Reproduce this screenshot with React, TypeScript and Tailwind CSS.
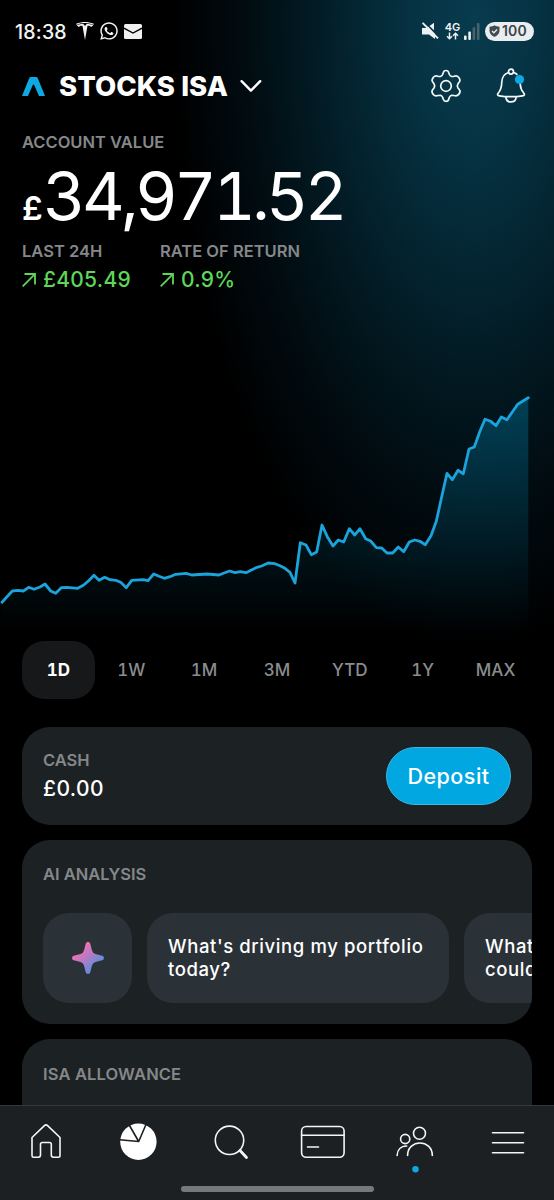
import type { ReactNode } from 'react'
import { SiTesla } from 'react-icons/si'
import { FaWhatsapp } from 'react-icons/fa'

const ranges = ['1D', '1W', '1M', '3M', 'YTD', '1Y', 'MAX']

const points: [number, number][] = [
  [2, 602.3], [12.3, 591], [17.7, 590.3], [23.3, 591], [28.7, 587.3], [34, 589.3], [40, 587], [45, 584],
  [50.7, 591], [55.7, 593.3], [61.3, 587.7], [66.7, 587.3], [77.7, 588.3], [83.3, 585.3], [88.7, 580.7],
  [94, 575.3], [99, 580.3], [104.7, 577.3], [110, 579.7], [115.7, 580.3], [120.7, 582.3], [126.3, 587.7],
  [131.7, 580.3], [143.3, 579.7], [148, 580.7], [153.7, 574], [159, 576.3], [164.3, 578.3], [170, 576.7],
  [175.7, 574.3], [186, 573.3], [191.7, 575], [207, 574], [219, 575], [224, 573], [229.7, 571], [235, 572.7],
  [240.3, 571.7], [246, 572.7], [256, 567.7], [261.7, 566], [268, 563], [275, 563.7], [280, 565.7],
  [285, 568.3], [290, 572.3], [295, 583], [300.3, 542.7], [306, 545], [311.3, 554.7], [316.7, 552],
  [322, 525], [327.3, 536.7], [333, 546], [338.3, 540], [343.7, 542], [349.3, 528.7], [354.7, 535],
  [360, 528.7], [365.7, 538.7], [370.7, 541], [376.3, 547.7], [381.7, 548], [387, 553], [392.7, 553],
  [398.3, 547], [403.7, 551.7], [409.3, 542], [414.7, 540], [420, 541.3], [425.3, 544.7], [431, 535.7],
  [436.3, 521.3], [441.7, 496.7], [447, 473.3], [452.3, 479.7], [458, 470.3], [463.3, 473.7], [469, 449],
  [474.3, 447], [479.7, 431.7], [485, 419.3], [490.7, 421.3], [496, 425.7], [501.3, 417], [507, 419.7],
  [512.3, 412], [517.7, 404.3], [528.3, 397.8],
]

export default function App() {
  return (
    <div className="flex h-[1200px] w-[554px] flex-col overflow-hidden bg-black bg-[radial-gradient(ellipse_300px_630px_at_474px_20px,#073b4d_0%,#063445_18%,#042633_38%,#021820_58%,#010b10_78%,#000_100%)] font-['Inter','Liberation_Sans',sans-serif] text-white">
      <StatusBar />
      <Header />
      <Summary />
      <PriceChart />
      <RangeTabs />
      <main className="mt-7 flex min-h-0 flex-1 flex-col gap-[15px] overflow-hidden px-[22px]">
        <CashCard />
        <AnalysisCard />
        <section className="h-24 shrink-0 rounded-t-[28px] bg-[#1c2123] px-[21px] pt-[24px]">
          <Label className="tracking-[0.15px]">ISA ALLOWANCE</Label>
        </section>
      </main>
      <BottomNav />
    </div>
  )
}

function Label({ children, className = '' }: { children: ReactNode; className?: string }) {
  return (
    <p className={`text-[16.5px] leading-[22px] font-semibold whitespace-nowrap text-[#85888a] ${className}`}>{children}</p>
  )
}

function StatusBar() {
  return (
    <div className="flex h-[62px] shrink-0 items-center pr-[20px] pl-[15px] text-[#f1f3f4]">
      <span className="w-[61px] pt-px text-[19.5px] leading-6 font-medium tracking-[0.2px]">18:38</span>
      <SiTesla className="h-[18px] w-[18px]" />
      <FaWhatsapp className="ml-[5px] h-5 w-5" />
      <svg className="ml-[5px]" width="18" height="15" viewBox="0 0 18 15">
        <rect width="18" height="15" rx="1.5" fill="#eef0f1" />
        <path d="M0 4.2 9 9l9-4.8" fill="none" stroke="#000" strokeWidth="1.4" />
      </svg>
      <svg className="ml-auto" width="18" height="18" viewBox="0 0 18 18">
        <path d="M1 6h4l2-1.500 7 7.500v5l-6-4.500H1zM8.500 4 13 .800v7.400z" fill="#eef0f1" />
        <path d="M1.600.800 17 16.400" stroke="#eef0f1" strokeWidth="1.900" />
      </svg>
      <div className="ml-[5px] flex w-[17px] flex-col items-center">
        <span className="text-[11px] leading-[10px] font-semibold">4G</span>
        <svg width="13" height="8" viewBox="0 0 13 8" fill="none" stroke="#eef0f1" strokeWidth="1.5">
          <path d="M3.5.5v6M1 4.3l2.5 2.5L6 4.3M9.500 7.500v-6M7 3.700l2.500-2.500L12 3.700" />
        </svg>
      </div>
      <svg className="ml-[3px]" width="16" height="17" viewBox="0 0 16 17">
        <rect y="12.5" width="2.6" height="4.5" rx="1" fill="#eef0f1" />
        <rect x="4.3" y="8.5" width="2.6" height="8.5" rx="1" fill="#eef0f1" />
        <rect x="8.6" y="4.3" width="2.6" height="12.7" rx="1" fill="#49636d" />
        <rect x="12.9" width="2.6" height="17" rx="1" fill="#49636d" />
      </svg>
      <div className="ml-[5px] flex h-[19px] w-[49px] items-center rounded-full bg-[#e9edf0] pl-[4px] text-[#3a4449]">
        <svg width="11" height="12" viewBox="0 0 11 12">
          <path d="M5.5.3C4 1.3 2.2 1.6.5 1.8v4C.5 8.8 3 11 5.500 11.800 8 11 10.500 8.800 10.500 5.800v-4C8.800 1.600 7 1.300 5.500.3z" fill="#424b50" />
          <path d="m3 6 1.9 1.8L8.100 4.500" fill="none" stroke="#e9edf0" strokeWidth="1.3" />
        </svg>
        <span className="ml-[2px] text-[14px] leading-none font-semibold tracking-[0.2px]">100</span>
      </div>
    </div>
  )
}

function Header() {
  return (
    <header className="flex h-12 shrink-0 items-center pl-[22px]">
      <svg width="23" height="19" viewBox="0 0 23 19">
        <path d="M0 19 7.200 1.200Q7.700 0 9 0h5Q15.300 0 15.800 1.200L23 19h-6L12.300 8.300Q11.500 6.800 10.700 8.300L6 19z" fill="#0ea8e3" />
      </svg>
      <h1 className="ml-[14px] w-[170px] text-[27.5px] leading-8 font-extrabold tracking-[0.05px] whitespace-nowrap">STOCKS ISA</h1>
      <svg className="ml-[11px]" width="23" height="14" viewBox="0 0 23 14" fill="none" stroke="#fff" strokeWidth="2.4" strokeLinecap="round" strokeLinejoin="round">
        <path d="m1.600 2.200 9.300 9.500 9.300-9.500" />
      </svg>
      <svg className="ml-[165px]" width="36" height="36" viewBox="0 0 36 36" fill="none" stroke="#f4f8f9" strokeWidth="1.7" strokeLinejoin="round">
        <path d="M15.4 4.3Q16 2.5 18 2.5T20.6 4.3L21.4 6.5Q22 8 23.6 8.5L26 8.3Q29 7.3 30.6 9.3 32.9 12.3 31.3 14L30 15.7Q28.7 17.8 30 20L31.4 21.7Q33 23.5 30.7 26.4 29 28.6 26 27.5L23.6 27.3Q22 27.8 21.4 29.3L20.6 31.6Q20 33.4 18 33.4T15.4 31.6L14.6 29.3Q14 27.8 12.4 27.3L10 27.5Q7 28.6 5.3 26.4 3 23.5 4.6 21.7L6 20Q7.3 17.8 6 15.700L4.700 14Q3.100 12.300 5.400 9.300 7 7.300 10 8.300L12.400 8.500Q14 8 14.600 6.500z" />
        <circle cx="18" cy="18" r="5.3" />
      </svg>
      <svg className="ml-[29px]" width="36" height="38" viewBox="0 0 36 38" fill="none" stroke="#f4f8f9" strokeWidth="1.7" strokeLinejoin="round" strokeLinecap="round">
        <circle cx="18" cy="4.6" r="2.5" />
        <path d="M15.500 5.500C10.500 7 9 10.500 8.800 15c-.2 6-1.300 8.500-3.500 11-1.300 1.500-.8 2.500 1.200 2.800 7.600 1.200 15.400 1.200 23 0 2-.3 2.500-1.300 1.200-2.800-2.200-2.500-3.300-5-3.500-9M20.500 5.500c1.500.4 2.500.9 3.400 1.800M13 31c.8 5.200 9.200 5.200 10 0" />
        <circle cx="26.500" cy="12.500" r="4.600" fill="#0ea8e3" stroke="none" />
      </svg>
    </header>
  )
}

function Summary() {
  return (
    <section className="flex h-[185px] shrink-0 flex-col pt-[21px] pl-[22px]">
      <Label>ACCOUNT VALUE</Label>
      <p className="mt-[3px] flex h-[80px] items-baseline whitespace-nowrap">
        <span className="w-[21px] text-[33px] font-semibold">£</span>
        <span className="text-[66px] leading-[80px] tracking-[-3.8px] tabular-nums">34,971.52</span>
      </p>
      <div className="mt-[4px] flex">
        <Change label="LAST 24H" value="£405.49" className="w-[138px]" />
        <Change label="RATE OF RETURN" value="0.9%" />
      </div>
    </section>
  )
}

function Change({ label, value, className = '' }: { label: string; value: string; className?: string }) {
  return (
    <div className={className}>
      <Label>{label}</Label>
      <div className="mt-[5px] flex h-[26px] items-center text-[#5ed657]">
        <svg width="14" height="14" viewBox="0 0 14 14" fill="none" stroke="currentColor" strokeWidth="1.8">
          <path d="M.7 13.3 12.9 1.1M2.500 1h10.500v10.500" />
        </svg>
        <span className="ml-[7px] text-[21px] leading-[26px] font-medium tracking-[0.25px]">{value}</span>
      </div>
    </div>
  )
}

function PriceChart() {
  const line = points.map(([x, y]) => `${x},${y}`).join(' ')

  return (
    <svg className="shrink-0" width="554" height="346" viewBox="0 295 554 346">
      <defs>
        <linearGradient id="areaFill" gradientUnits="userSpaceOnUse" x1="0" y1="397" x2="0" y2="632">
          <stop offset="0%" stopColor="#007ba3" stopOpacity={0.42} />
          <stop offset="100%" stopColor="#007ba3" stopOpacity={0} />
        </linearGradient>
      </defs>
      <polygon points={`0,632 ${line} 528.3,632`} fill="url(#areaFill)" />
      <polyline points={line} fill="none" stroke="#1ba3dc" strokeWidth="2.8" strokeLinejoin="round" strokeLinecap="round" />
    </svg>
  )
}

function RangeTabs() {
  return (
    <div className="mx-[22px] grid h-[58px] shrink-0 grid-cols-7 text-[17px] font-medium">
      {ranges.map((range, index) => (
        <button
          key={range}
          className={
            index === 0
              ? 'rounded-[22px] bg-[#17181a] pt-[2px] font-bold tabular-nums text-white'
              : 'pt-[2px] tabular-nums text-[#8b8d8f]'
          }
        >
          {range}
        </button>
      ))}
    </div>
  )
}

function CashCard() {
  return (
    <section className="flex h-[98px] shrink-0 items-center justify-between rounded-[28px] bg-[#1c2123] px-[21px]">
      <div>
        <Label>CASH</Label>
        <p className="mt-[4px] text-[21px] leading-[28px] font-medium tracking-[0.4px]">£0.00</p>
      </div>
      <button className="h-[58px] w-[125px] rounded-[29px] border border-[#35b7e8] bg-[#00a7e1] pt-px text-[21.5px] font-medium tracking-[0.5px]">
        Deposit
      </button>
    </section>
  )
}

function AnalysisCard() {
  return (
    <section className="h-[184px] shrink-0 overflow-hidden rounded-[28px] bg-[#1c2123] pt-[23px] pl-[21px]">
      <Label>AI ANALYSIS</Label>
      <div className="mt-[28px] flex gap-[15px] text-[18.5px] leading-[23px] font-medium tracking-[0.6px]">
        <div className="flex h-[90px] w-[89px] shrink-0 items-center justify-center rounded-[26px] bg-[#2a3238]">
          <svg width="32" height="32" viewBox="0 0 32 32">
            <defs>
              <linearGradient id="spark" x1="0.2" y1="0.2" x2="0.75" y2="0.8">
                <stop offset="0%" stopColor="#ff6cb5" />
                <stop offset="50%" stopColor="#b07cc4" />
                <stop offset="100%" stopColor="#5b8ee0" />
              </linearGradient>
            </defs>
            <path d="M13.700 1.800C14.300-.5 17.700-.5 18.300 1.800L20 8.500Q20.800 11.200 23.500 12L30.200 13.700C32.500 14.300 32.500 17.700 30.200 18.300L23.500 20Q20.800 20.800 20 23.500L18.300 30.200C17.700 32.500 14.300 32.500 13.700 30.200L12 23.500Q11.200 20.800 8.500 20L1.800 18.300C-.5 17.700-.5 14.300 1.800 13.700L8.500 12Q11.200 11.200 12 8.500z" fill="url(#spark)" />
          </svg>
        </div>
        <Prompt>
          What's driving my portfolio
          <br />
          today?
        </Prompt>
        <Prompt>
          What
          <br />
          could
        </Prompt>
      </div>
    </section>
  )
}

function Prompt({ children }: { children: ReactNode }) {
  return (
    <div className="h-[90px] w-[302px] shrink-0 rounded-[26px] bg-[#2a3238] px-[21px] pt-[22px] whitespace-nowrap">
      {children}
    </div>
  )
}

function BottomNav() {
  return (
    <nav className="flex h-[95px] shrink-0 flex-col items-center border-t border-[#34393c] bg-[#1c2023]">
      <div className="grid w-full grid-cols-6 justify-items-center pt-[13px]">
        <NavIcon>
          <path d="M22.4 6.7Q24 5.2 25.600 6.700L38 18.500V36.500Q38 38.200 36.300 38.200H31.500Q29.300 38.200 29.300 36V25.300Q29.300 23.500 27.500 23.500H20.300Q18.500 23.500 18.500 25.300V36Q18.500 38.200 16.300 38.200H11.600Q10 38.200 10 36.500V18.500z" />
        </NavIcon>
        <NavIcon>
          <circle cx="24.4" cy="22.7" r="18.2" fill="#fff" stroke="none" />
          <path d="M5.500 20.800l19.200 1.700L15.500 6.500M24.700 22.500 32 5.500" stroke="#1c2023" strokeWidth="1.6" />
        </NavIcon>
        <NavIcon>
          <circle cx="22.5" cy="21.3" r="14.2" />
          <path d="m33 31.500 6.500 7" strokeWidth="2.8" />
        </NavIcon>
        <NavIcon>
          <rect x="2.600" y="7.500" width="42.500" height="30.800" rx="4.500" />
          <path d="M2.600 16.300h42.500M8.500 28h11" />
        </NavIcon>
        <NavIcon>
          <circle cx="28.500" cy="14.300" r="6" />
          <circle cx="14.200" cy="20" r="4.600" />
          <path d="M16.600 36.500c0-16.700 24.700-16.700 24.700 0M6.100 36.500c.2-5.500 3.500-9.500 9.600-9.500" />
          <circle cx="24.500" cy="50.300" r="3.200" fill="#0ea8e3" stroke="none" />
        </NavIcon>
        <NavIcon>
          <path d="M8.500 13.700h31M8.500 23.700h31M8.500 33.700h31" />
        </NavIcon>
      </div>
      <div className="mt-[11px] h-[6px] w-[193px] rounded-full bg-[#77787a]" />
    </nav>
  )
}

function NavIcon({ children }: { children: ReactNode }) {
  return (
    <svg width="48" height="56" viewBox="0 0 48 56" fill="none" stroke="#f4f5f6" strokeWidth="1.6" strokeLinecap="round" strokeLinejoin="round">
      {children}
    </svg>
  )
}
